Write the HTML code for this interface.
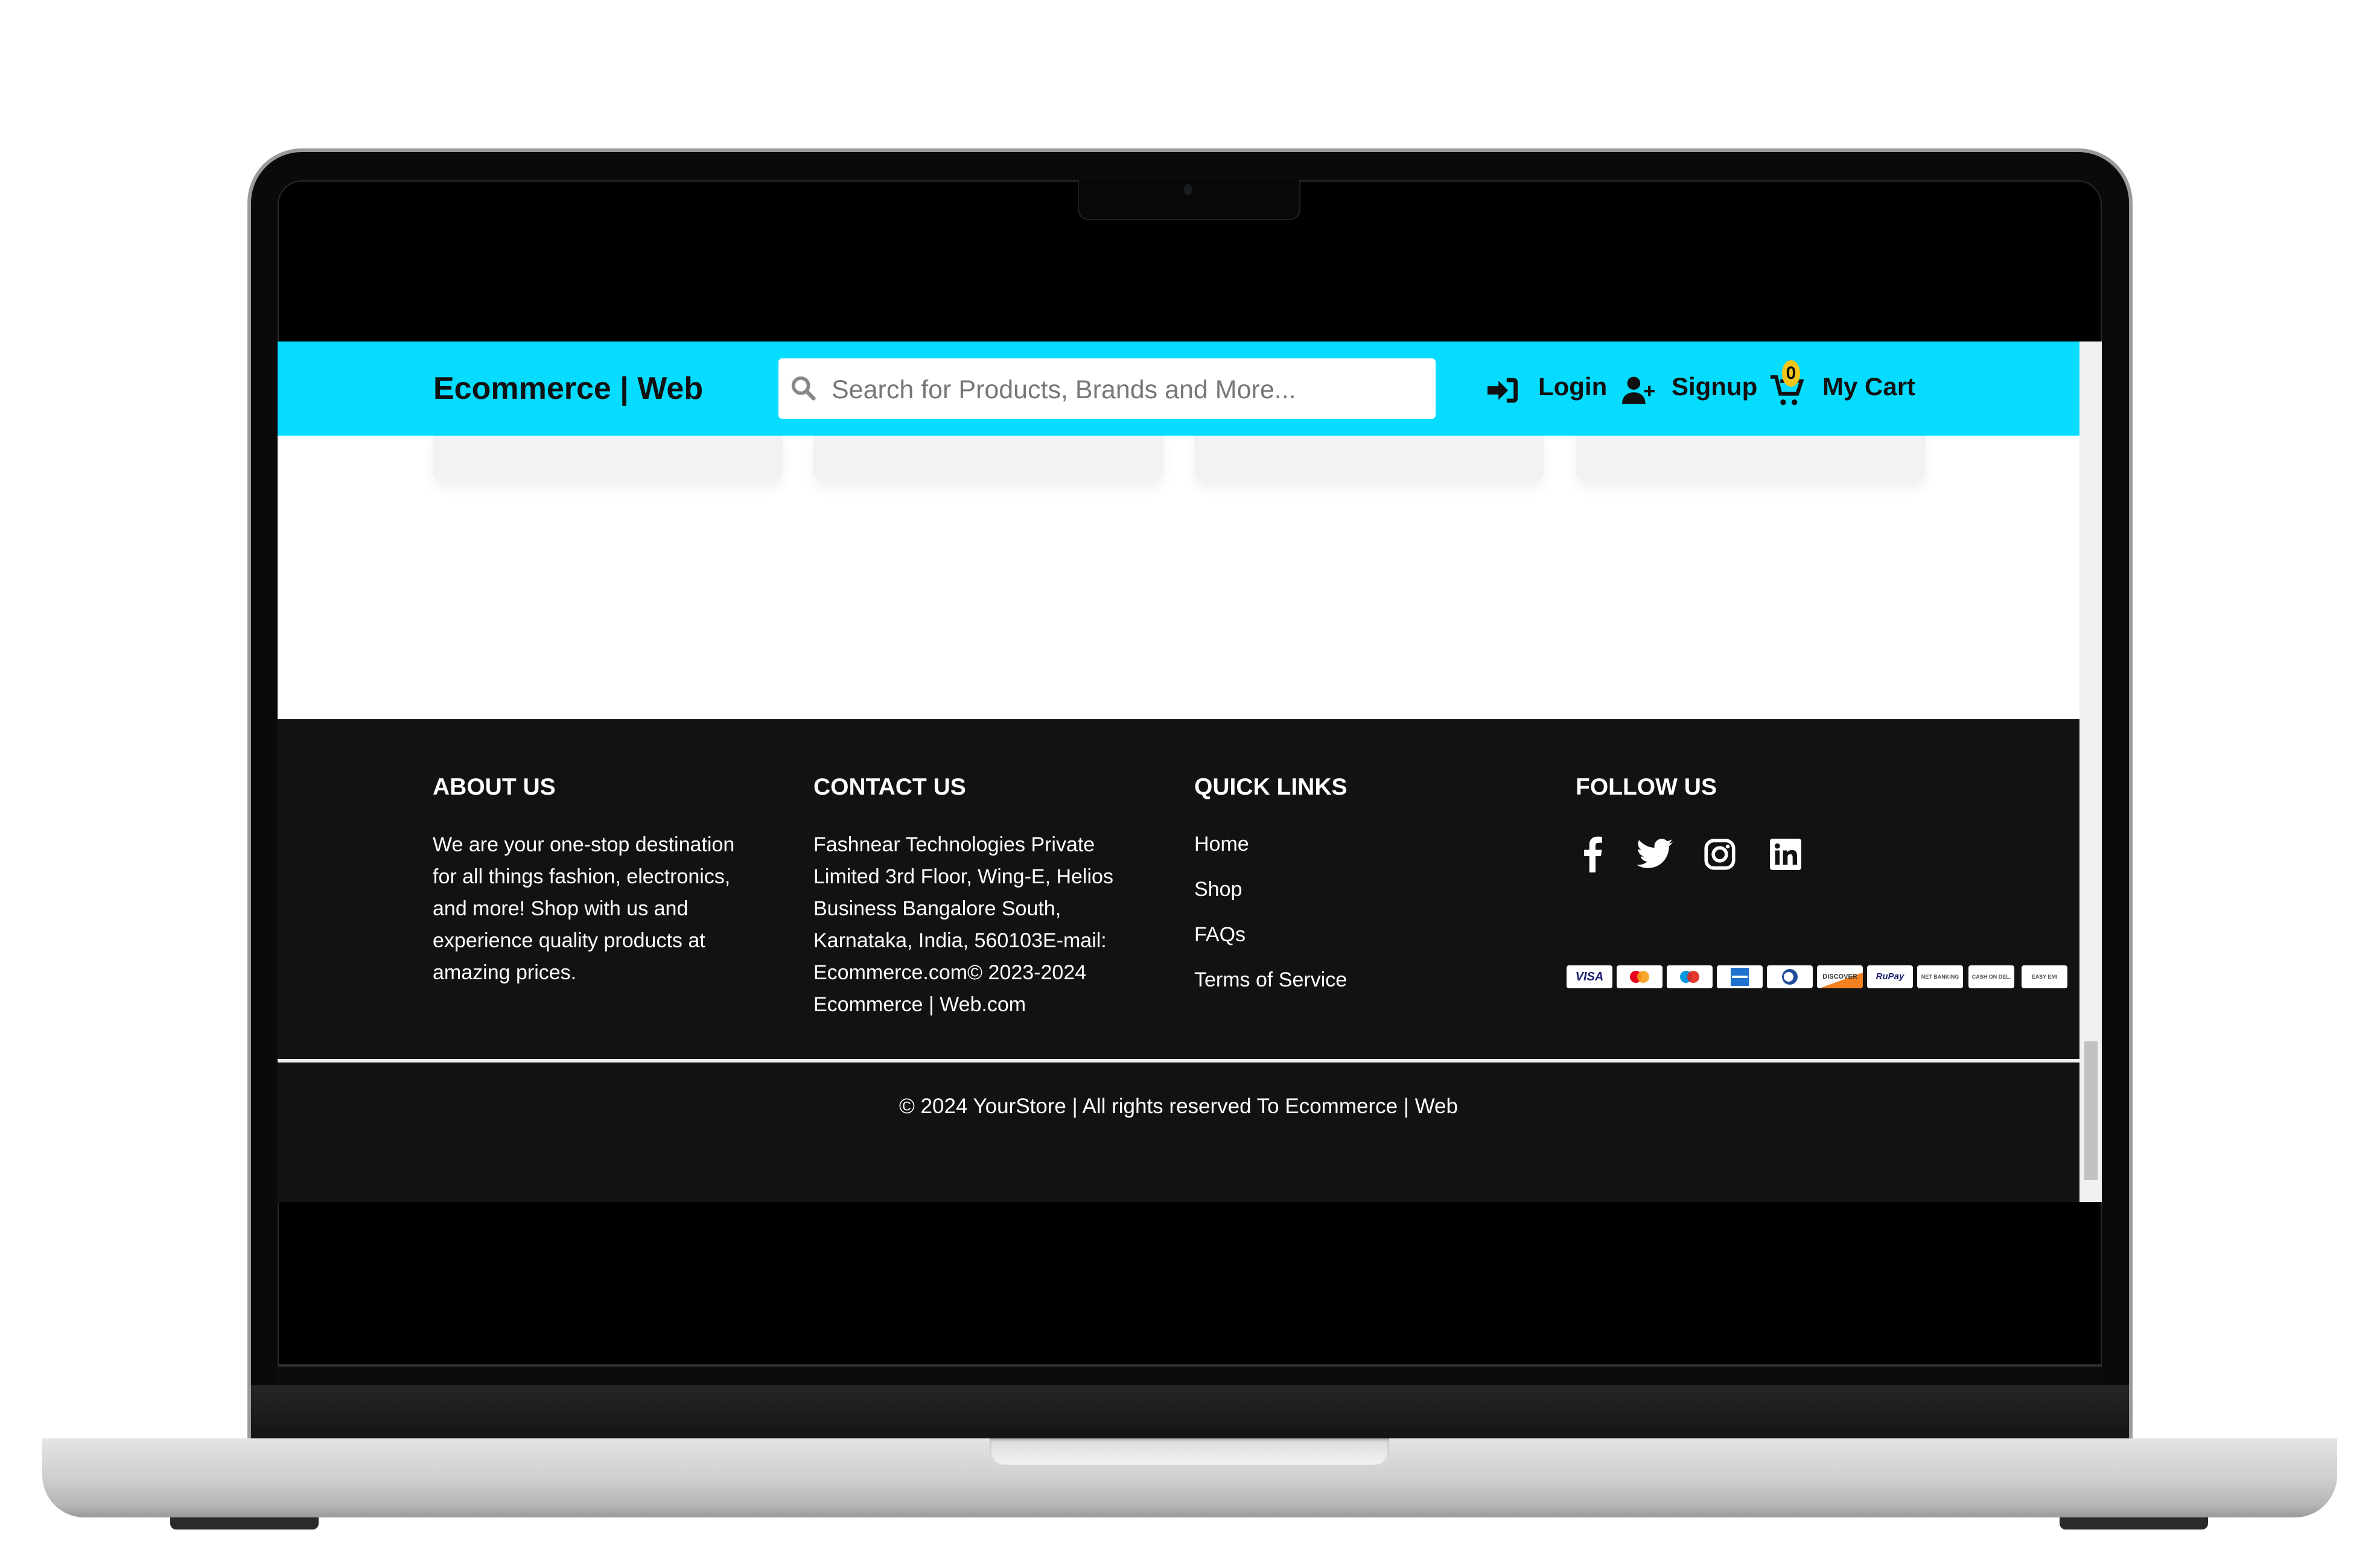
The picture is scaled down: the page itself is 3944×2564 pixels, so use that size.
<!DOCTYPE html>
<html><head><meta charset="utf-8"><style>
*{margin:0;padding:0;box-sizing:border-box}
body{width:3944px;height:2564px;background:#fff;position:relative;overflow:hidden;font-family:"Liberation Sans",sans-serif}
.a{position:absolute}
.lid{left:410px;top:246px;width:3124px;height:2150px;background:#0a0a0a;border-radius:90px 90px 0 0;border:6px solid #9a9a9a;border-bottom:none}
.scr{left:460px;top:299px;width:3023px;height:1964px;background:#000;border-radius:40px 40px 0 0;border:2px solid #2a2a2a}
.notch{left:1786px;top:299px;width:369px;height:66px;background:#080808;border-radius:0 0 18px 18px;border:2px solid #222;border-top:none}
.nav{left:460px;top:566px;width:2986px;height:156px;background:#06dcff}
.page{left:460px;top:722px;width:2986px;height:470px;background:#fff}
.card{top:722px;height:78px;width:580px;background:#f2f2f4;border-radius:0 0 20px 20px;box-shadow:0 10px 20px rgba(0,0,0,.06)}
.sb{left:3446px;top:566px;width:37px;height:1426px;background:#f1f1f1}
.foot{left:460px;top:1192px;width:2986px;height:800px;background:#121212;color:#fff}
h3{position:absolute;font-size:39px;font-weight:bold;top:1283px;color:#fff}
.t{position:absolute;font-size:34px;line-height:53px;color:#fff;top:1374px}
.lk{position:absolute;font-size:34px;color:#fff}
.pay{position:absolute;top:1600px;width:76px;height:38px;background:#fff;border-radius:4px;font-size:14px;font-weight:bold;color:#1a1f71;text-align:center;line-height:38px;overflow:hidden}
.nt{position:absolute;font-size:42px;font-weight:bold;color:#111;top:617px}
</style></head><body>
<div class="a lid"></div>
<div class="a scr"></div>
<div class="a notch"><div class="a" style="left:174px;top:6px;width:14px;height:18px;border-radius:50%;background:#1a1c24"></div></div>
<div class="a" style="left:460px;top:2263px;width:3023px;height:33px;background:#0c0c0c;border-top:2px solid #333"></div>
<div class="a" style="left:416px;top:2296px;width:3112px;height:88px;background:linear-gradient(#262626,#141414)"></div>
<div class="a nav"></div>
<div class="a page"></div>
<div class="a card" style="left:717px"></div>
<div class="a card" style="left:1348px"></div>
<div class="a card" style="left:1979px"></div>
<div class="a card" style="left:2611px"></div>
<div class="a sb"><div class="a" style="left:8px;top:1160px;width:22px;height:230px;background:#c1c1c1"></div></div>
<div class="a" style="left:718px;top:614px;font-size:52px;font-weight:bold;color:#111">Ecommerce | Web</div>
<div class="a" style="left:1290px;top:594px;width:1089px;height:100px;background:#fff;border-radius:6px"></div>
<svg class="a" style="left:1308px;top:620px" width="46" height="46" viewBox="0 0 24 24"><circle cx="10" cy="10" r="6.5" fill="none" stroke="#888" stroke-width="3"/><path d="M15 15l6 6" stroke="#888" stroke-width="3.5" stroke-linecap="round"/></svg>
<div class="a" style="left:1378px;top:622px;font-size:43px;color:#777">Search for Products, Brands and More...</div>
<svg class="a" style="left:2462px;top:622px" width="56" height="50" viewBox="0 0 24 22"><path d="M1 8h8V4l7 7-7 7v-4H1z M15 2h5a3 3 0 0 1 3 3v12a3 3 0 0 1-3 3h-5v-3h5V5h-5z" fill="#111"/></svg>
<div class="nt" style="left:2549px">Login</div>
<svg class="a" style="left:2688px;top:622px" width="56" height="48" viewBox="0 0 26 22"><circle cx="9" cy="6" r="5" fill="#111"/><path d="M0 22c0-6 4-9 9-9s9 3 9 9z M20 8h2v3h3v2h-3v3h-2v-3h-3v-2h3z" fill="#111"/></svg>
<div class="nt" style="left:2770px">Signup</div>
<svg class="a" style="left:2934px;top:622px" width="56" height="52" viewBox="0 0 24 22"><path d="M0 1h4l3 12h12l3-9H7" fill="none" stroke="#111" stroke-width="2.6"/><circle cx="9" cy="19" r="2" fill="#111"/><circle cx="17" cy="19" r="2" fill="#111"/></svg>
<div class="a" style="left:2953px;top:597px;width:30px;height:44px;border-radius:50%;background:#f5c518;font-size:30px;font-weight:bold;text-align:center;line-height:44px;color:#111">0</div>
<div class="nt" style="left:3020px">My Cart</div>
<div class="a foot"></div>
<h3 style="left:717px">ABOUT US</h3>
<h3 style="left:1348px">CONTACT US</h3>
<h3 style="left:1979px">QUICK LINKS</h3>
<h3 style="left:2611px">FOLLOW US</h3>
<div class="t" style="left:717px">We are your one-stop destination<br>for all things fashion, electronics,<br>and more! Shop with us and<br>experience quality products at<br>amazing prices.</div>
<div class="t" style="left:1348px">Fashnear Technologies Private<br>Limited 3rd Floor, Wing-E, Helios<br>Business Bangalore South,<br>Karnataka, India, 560103E-mail:<br>Ecommerce.com© 2023-2024<br>Ecommerce | Web.com</div>
<div class="lk" style="left:1979px;top:1380px">Home</div>
<div class="lk" style="left:1979px;top:1455px">Shop</div>
<div class="lk" style="left:1979px;top:1530px">FAQs</div>
<div class="lk" style="left:1979px;top:1605px">Terms of Service</div>
<svg class="a" style="left:2620px;top:1386px" width="36" height="60" viewBox="0 0 12 20"><path d="M8 20V11h3l.5-3.5H8V5.3c0-1 .3-1.7 1.8-1.7h1.8V.4C11.2.3 10.2.2 9 .2 6.4.2 4.6 1.8 4.6 4.7V7.5H1.7V11h2.9v9z" fill="#fff"/></svg>
<svg class="a" style="left:2712px;top:1390px" width="60" height="50" viewBox="0 0 24 20"><path d="M24 2.4c-.9.4-1.8.7-2.8.8 1-.6 1.8-1.6 2.2-2.7-1 .6-2 1-3.1 1.2A4.9 4.9 0 0 0 11.9 6 14 14 0 0 1 1.7.9a4.9 4.9 0 0 0 1.5 6.6c-.8 0-1.6-.3-2.2-.6 0 2.4 1.7 4.4 3.9 4.8-.7.2-1.5.2-2.2.1.6 2 2.4 3.4 4.6 3.4A9.9 9.9 0 0 1 0 17.3 14 14 0 0 0 7.5 19.5c9 0 14-7.5 14-14v-.6c1-.7 1.8-1.6 2.5-2.5z" fill="#fff"/></svg>
<svg class="a" style="left:2824px;top:1390px" width="52" height="52" viewBox="0 0 24 24"><rect x="1.5" y="1.5" width="21" height="21" rx="6" fill="none" stroke="#fff" stroke-width="2.6"/><circle cx="12" cy="12" r="5" fill="none" stroke="#fff" stroke-width="2.6"/><circle cx="18" cy="6" r="1.5" fill="#fff"/></svg>
<svg class="a" style="left:2933px;top:1390px" width="52" height="52" viewBox="0 0 24 24"><rect width="24" height="24" rx="2" fill="#fff"/><rect x="4" y="9" width="3.4" height="11" fill="#121212"/><circle cx="5.7" cy="5.6" r="2" fill="#121212"/><path d="M10 9h3.2v1.6c.6-1 1.8-1.9 3.6-1.9 3.4 0 4 2.2 4 5V20h-3.4v-5.3c0-1.3-.1-2.9-1.8-2.9s-2.1 1.4-2.1 2.8V20H10z" fill="#121212"/></svg>
<div class="pay" style="left:2596px;font-size:20px;font-style:italic">VISA</div>
<div class="pay" style="left:2679px"><svg width="76" height="38"><circle cx="32" cy="19" r="10" fill="#eb001b"/><circle cx="44" cy="19" r="10" fill="#f79e1b" opacity=".9"/></svg></div>
<div class="pay" style="left:2762px"><svg width="76" height="38"><circle cx="32" cy="19" r="10" fill="#0099df"/><circle cx="44" cy="19" r="10" fill="#e2231a" opacity=".9"/></svg></div>
<div class="pay" style="left:2845px"><svg width="76" height="38"><rect x="23" y="4" width="30" height="30" fill="#1f72cd"/><rect x="25" y="17" width="26" height="4" fill="#fff"/></svg></div>
<div class="pay" style="left:2928px"><svg width="76" height="38"><circle cx="38" cy="19" r="13" fill="#1f4e9a"/><circle cx="36" cy="19" r="8" fill="#fff"/></svg></div>
<div class="pay" style="left:3011px;color:#333;font-size:11px;background:linear-gradient(160deg,#fff 60%,#f48120 60%)">DISCOVER</div>
<div class="pay" style="left:3094px;font-size:15px;font-style:italic">RuPay</div>
<div class="pay" style="left:3177px;color:#555;font-size:9px">NET BANKING</div>
<div class="pay" style="left:3262px;color:#555;font-size:9px">CASH ON DEL.</div>
<div class="pay" style="left:3350px;color:#555;font-size:9px">EASY EMI</div>
<div class="a" style="left:460px;top:1755px;width:2986px;height:6px;background:#eee"></div>
<div class="a" style="left:460px;top:1814px;width:2986px;text-align:center;font-size:35px;color:#fff">© 2024 YourStore | All rights reserved To Ecommerce | Web</div>
<div class="a" style="left:70px;top:2384px;width:3803px;height:131px;background:linear-gradient(#e4e4e4,#cfcfcf 50%,#b5b5b5 85%,#999);border-radius:0 0 70px 70px"></div>
<div class="a" style="left:1640px;top:2384px;width:662px;height:44px;background:linear-gradient(#d9d9d9,#f4f4f4);border-radius:0 0 24px 24px;box-shadow:inset 0 2px 4px #999"></div>
<div class="a" style="left:282px;top:2515px;width:246px;height:20px;background:#2a2a2a;border-radius:0 0 10px 10px"></div>
<div class="a" style="left:3413px;top:2515px;width:246px;height:20px;background:#2a2a2a;border-radius:0 0 10px 10px"></div>
</body></html>
